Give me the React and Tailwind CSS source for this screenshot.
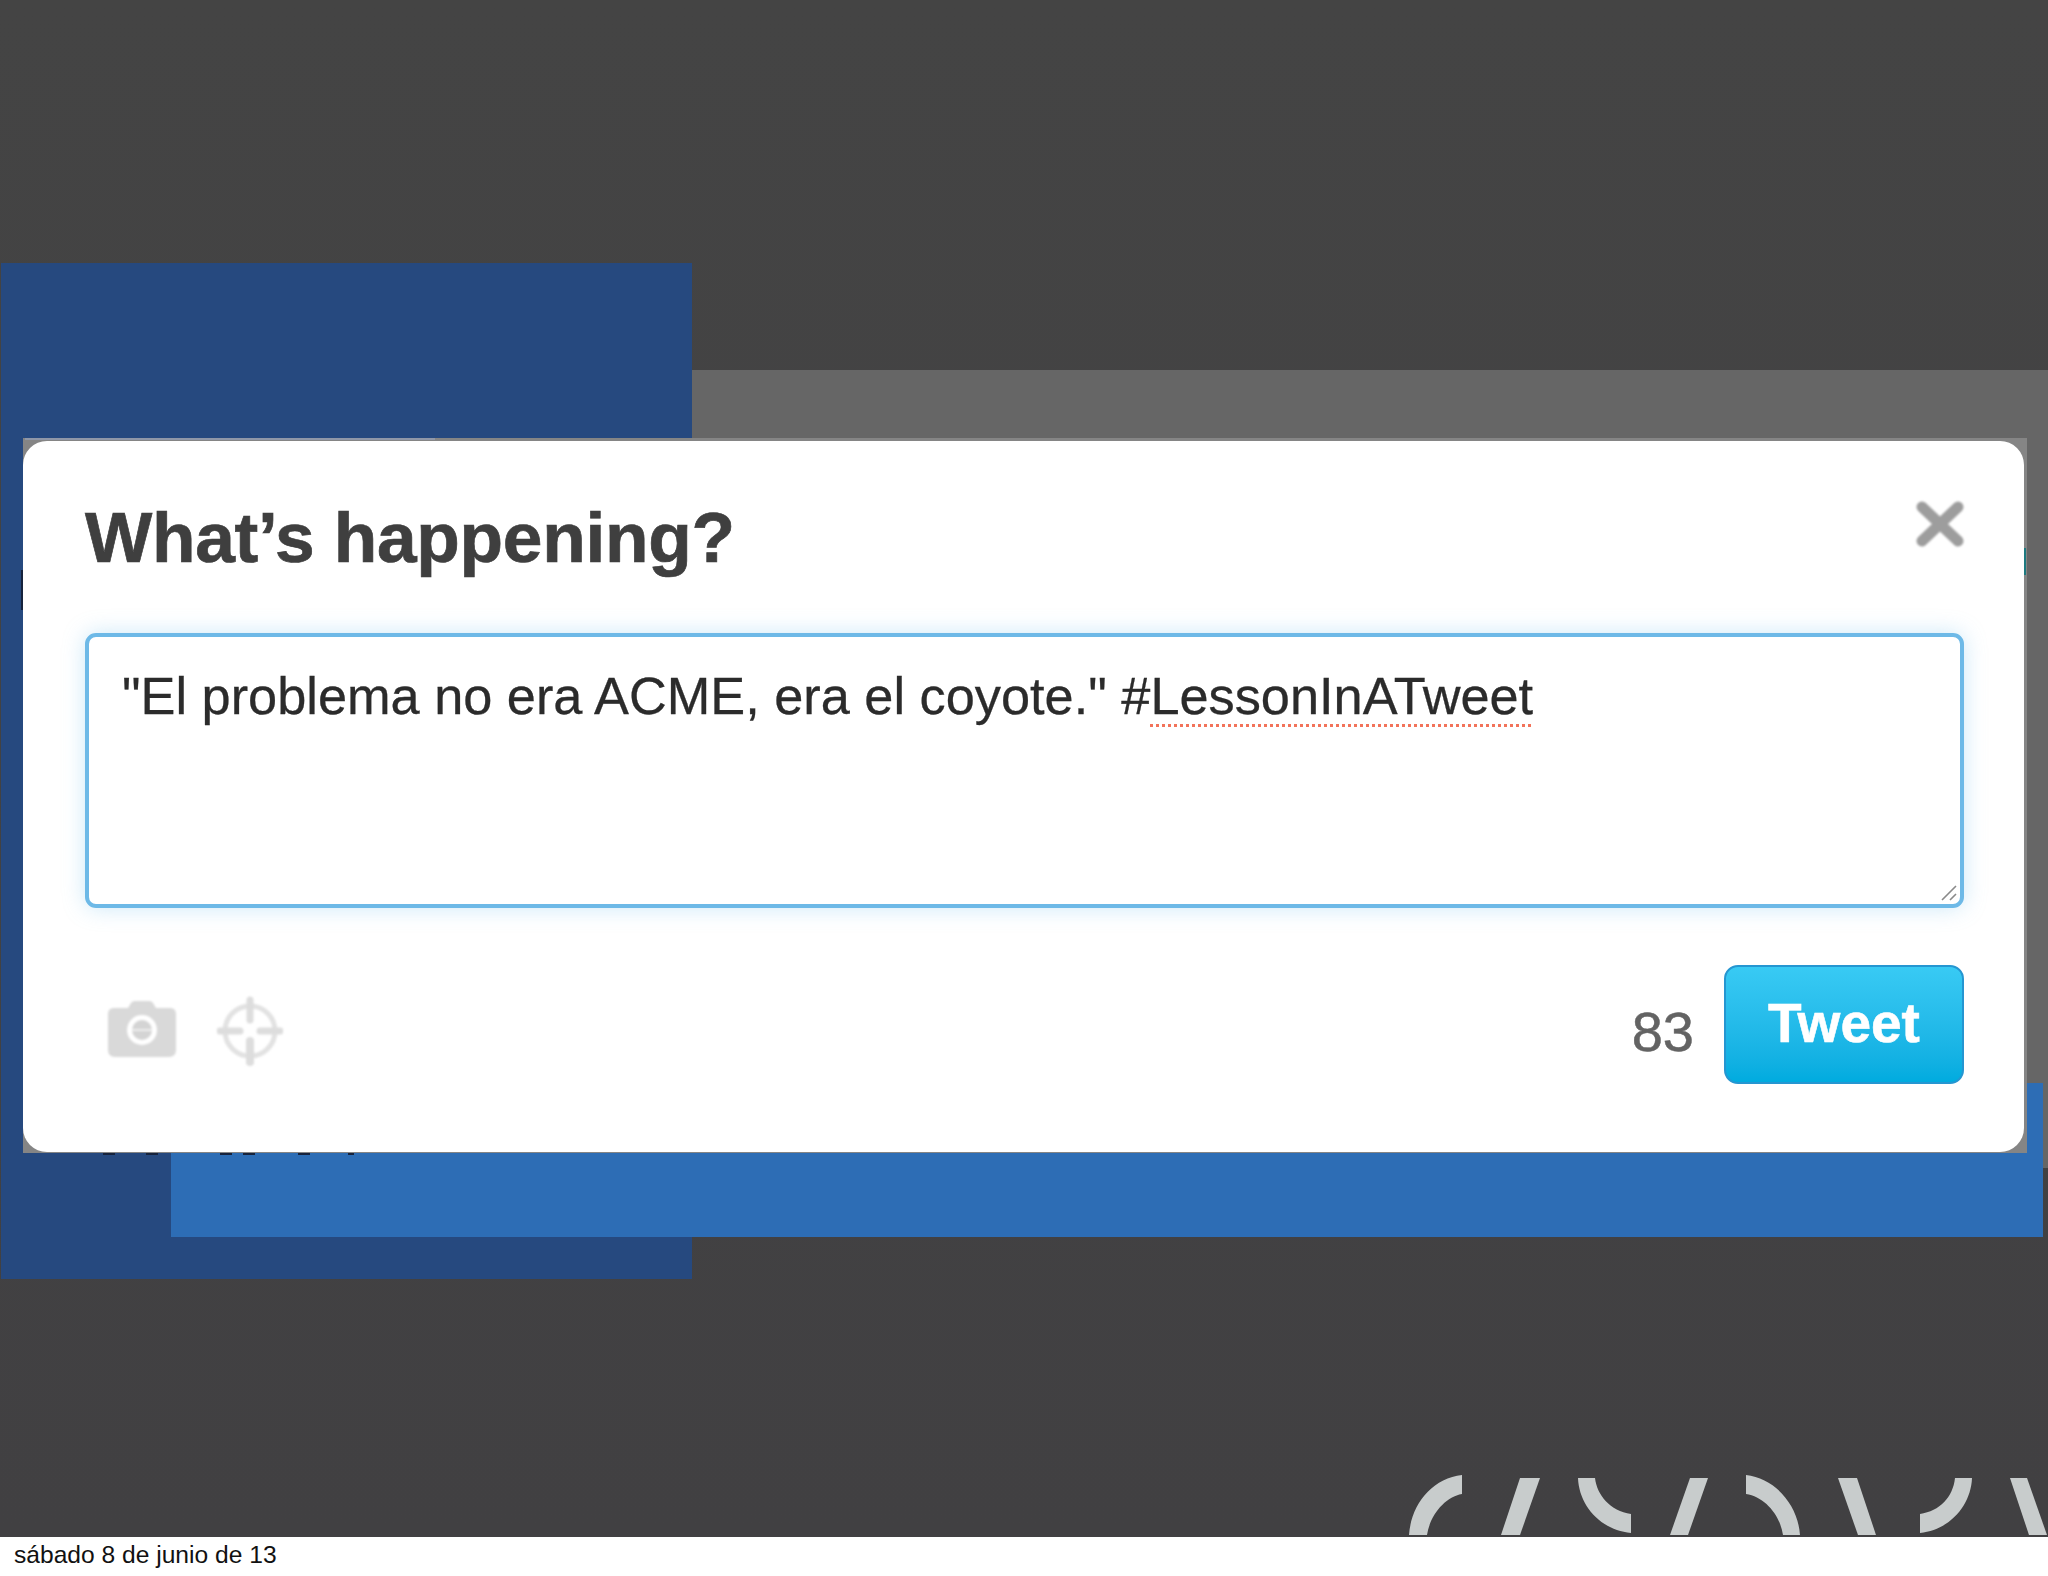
const sans = "font-['Liberation_Sans',Arial,sans-serif]";

function CameraIcon() {
  return (
    <svg width="68" height="56" viewBox="0 0 68 56" className="block blur-[0.8px]">
      <path
        d="M6 7h14l3-5q1-2 4-2h14q3 0 4 2l3 5h14q6 0 6 6v36q0 7-7 7H7q-7 0-7-7V13q0-6 6-6z"
        fill="#d9d9d9"
      />
      <circle cx="34" cy="29" r="15" fill="#fff" />
      <circle cx="34" cy="29" r="10" fill="#d4d4d4" />
      <rect x="24" y="28" width="20" height="2" fill="#eee" />
    </svg>
  );
}

function TargetIcon() {
  return (
    <svg width="66" height="70" viewBox="1 0 66 70" className="block blur-[0.8px]">
      <circle cx="34" cy="35" r="25" fill="none" stroke="#e2e2e2" strokeWidth="5" />
      <g stroke="#dddddd" strokeLinecap="round">
        <path d="M34 4v20" strokeWidth="7" />
        <path d="M34 45v21" strokeWidth="8" />
        <path d="M4 35h20" strokeWidth="7" />
        <path d="M44 35h20" strokeWidth="7" />
      </g>
    </svg>
  );
}

function CloseIcon() {
  return (
    <svg width="50" height="48" viewBox="0 0 50 48" className="block blur-[0.8px]">
      <path d="M7 7l36 34M43 7L7 41" stroke="#9d9d9d" strokeWidth="11" strokeLinecap="round" />
    </svg>
  );
}

function ResizeGrip() {
  return (
    <svg width="16" height="16" viewBox="0 0 16 16" className="absolute right-[3px] bottom-[3px]">
      <path d="M1 15L15 1M9 15l6-6" stroke="#8a8a8a" strokeWidth="1.6" />
    </svg>
  );
}

// cut off logo shapes at the bottom of the slide
function SlideMarks() {
  const paths = [
    "M1462 1475L1462 1494C1445 1497 1430 1515 1427 1535L1409 1535C1411 1505 1432 1478 1462 1475Z",
    "M1520 1478L1540 1478L1520 1535L1501 1535Z",
    "M1578 1478L1595 1478C1597 1495 1610 1511 1631 1514L1631 1533C1600 1530 1579 1505 1578 1478Z",
    "M1690 1478L1708 1478L1688 1535L1670 1535Z",
    "M1746 1475C1775 1478 1798 1505 1800 1535L1783 1535C1780 1515 1765 1497 1746 1494Z",
    "M1838 1478L1857 1478L1876 1535L1858 1535Z",
    "M1955 1478L1972 1478C1971 1505 1950 1530 1920 1533L1920 1514C1940 1511 1953 1497 1955 1478Z",
    "M2010 1478L2027 1478L2047 1535L2029 1535Z",
  ];
  return (
    <svg
      width="648"
      height="77"
      viewBox="1400 1460 648 77"
      className="absolute left-[1400px] top-[1460px]"
    >
      {paths.map((d) => (
        <path key={d} d={d} fill="#c8cccc" />
      ))}
    </svg>
  );
}

function TweetBox() {
  return (
    <div className="absolute left-[23px] top-[438px] w-[2004px] h-[715px] bg-[#858585] pt-[3px] pr-[3px] pb-[1px]">
      {/* bits of the page behind the dialog, clipped by its edges */}
      <div className="absolute left-[2px] top-0 w-[410px] h-[2px] bg-[#8f97a8]" />
      <div className="absolute left-[-2px] top-[132px] w-[2px] h-[40px] bg-[#16233d]" />
      <div className="absolute right-[1px] top-[110px] w-[3px] h-[27px] bg-[#1d7a80]" />
      <div className={`relative h-full rounded-[24px] bg-white pl-[62px] pr-[60px] flex flex-col antialiased ${sans}`}>
        <div className="h-[192px] flex justify-between items-start">
          <h2 className="mt-[56px] text-[71.3px] leading-[80px] font-bold tracking-[-0.3px] text-[#3f3f3f] [-webkit-text-stroke:0.7px_#3f3f3f]">
            What’s happening?
          </h2>
          <div className="mt-[59px] mr-[-1px]">
            <CloseIcon />
          </div>
        </div>
        <div className="relative h-[275px] rounded-[11px] border-4 border-[#6db9e7] bg-white pl-[33px] pt-[29px] shadow-[0_0_22px_rgba(110,190,235,0.35)]">
          <p className="text-[52.3px] leading-[60px] text-[#2b2b2b] whitespace-nowrap [-webkit-text-stroke:0.3px_#2b2b2b]">
            "El problema no era ACME, era el coyote." #
            <span className="underline decoration-dotted decoration-[3px] decoration-[#f2735a] underline-offset-[10px]">
              LessonInATweet
            </span>
          </p>
          <ResizeGrip />
        </div>
        <div className="mt-[57px] flex items-start">
          <div className="ml-[23px] mt-[36px]">
            <CameraIcon />
          </div>
          <div className="ml-[41px] mt-[31px]">
            <TargetIcon />
          </div>
          <span className="ml-auto mr-[30px] mt-[35px] text-[56px] leading-[64px] text-[#636363] [-webkit-text-stroke:0.5px_#636363]">
            83
          </span>
          <button className="w-[240px] h-[119px] rounded-[14px] border-2 border-[#2596d1] bg-gradient-to-b from-[#38caf4] to-[#00abdf] text-[55px] font-bold leading-none text-white pb-[2px] [-webkit-text-stroke:0.6px_#fff]">
            Tweet
          </button>
        </div>
      </div>
      {/* same clipped page text under the bottom edge */}
      <div className="absolute left-[80px] bottom-[-2px] flex">
        <span className="w-[12px] h-[2px] bg-[#16233d]" />
        <span className="ml-[31px] w-[12px] h-[2px] bg-[#16233d]" />
        <span className="ml-[62px] w-[12px] h-[2px] bg-[#16233d]" />
        <span className="ml-[11px] w-[12px] h-[2px] bg-[#16233d]" />
        <span className="ml-[43px] w-[12px] h-[2px] bg-[#16233d]" />
        <span className="ml-[38px] w-[6px] h-[2px] bg-[#16233d]" />
      </div>
    </div>
  );
}

export default function App() {
  return (
    <div className="w-[2048px] h-[1576px] overflow-hidden flex flex-col bg-white">
      <div className="relative h-[1537px] bg-gradient-to-b from-[#444444] to-[#414042]">
        <div className="absolute left-[692px] top-[370px] w-[1356px] h-[798px] bg-[#666666]" />
        <div className="absolute left-[1px] top-[263px] w-[691px] h-[1016px] bg-[#26497f]" />
        <div className="absolute left-[171px] top-[1083px] w-[1872px] h-[154px] bg-[#2d6db5]" />
        <TweetBox />
        <SlideMarks />
      </div>
      <p className={`pl-[14px] pt-[4px] text-[24.6px] leading-[28px] text-[#111] antialiased ${sans}`}>
        sábado 8 de junio de 13
      </p>
    </div>
  );
}
